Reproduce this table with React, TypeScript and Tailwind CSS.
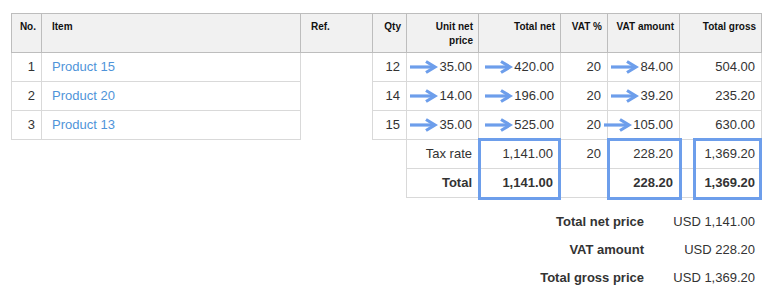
import React from "react";

type Line = {
  no: number;
  item: string;
  qty: number;
  unit: string;
  net: string;
  vat: number;
  vatAmount: string;
  gross: string;
};

const lines: Line[] = [
  { no: 1, item: "Product 15", qty: 12, unit: "35.00", net: "420.00", vat: 20, vatAmount: "84.00", gross: "504.00" },
  { no: 2, item: "Product 20", qty: 14, unit: "14.00", net: "196.00", vat: 20, vatAmount: "39.20", gross: "235.20" },
  { no: 3, item: "Product 13", qty: 15, unit: "35.00", net: "525.00", vat: 20, vatAmount: "105.00", gross: "630.00" },
];

const Arrow = () => (
  <svg width="28" height="14" viewBox="0 0 28 14" className="shrink-0 mr-[1px]">
    <line x1="0" y1="7" x2="24" y2="7" stroke="#6d9eeb" strokeWidth="3.2" />
    <polyline
      points="16,1.5 25,7 16,12.5"
      fill="none"
      stroke="#6d9eeb"
      strokeWidth="3.2"
      strokeLinejoin="miter"
    />
  </svg>
);

const ArrowCell = ({ value }: { value: string }) => (
  <td className="border border-[#d9d9d9] pr-[6px] align-middle">
    <div className="flex items-center justify-end">
      <Arrow />
      <span>{value}</span>
    </div>
  </td>
);

const th = "border border-[#bdbdbd] bg-[#f1f1f1] align-top pt-[6px] text-[10px] font-bold leading-[14px] text-[#111]";
const td = "border border-[#d9d9d9] align-middle";

const App = () => {
  return (
    <div
      className="w-[772px] h-[298px] bg-white text-[13px] text-[#333] overflow-hidden"
      style={{ fontFamily: '"Liberation Sans", Arial, sans-serif' }}
    >
      <div className="relative pt-[13px] pl-[11px]">
        <table className="table-fixed border-collapse w-[750px]">
          <colgroup>
            <col className="w-[30px]" />
            <col className="w-[259px]" />
            <col className="w-[72px]" />
            <col className="w-[34px]" />
            <col className="w-[72px]" />
            <col className="w-[82px]" />
            <col className="w-[47px]" />
            <col className="w-[72px]" />
            <col className="w-[82px]" />
          </colgroup>
          <thead>
            <tr className="h-[39px]">
              <th className={`${th} text-right pr-[5px]`}>No.</th>
              <th className={`${th} text-left pl-[10px]`}>Item</th>
              <th className={`${th} text-left pl-[10px]`}>Ref.</th>
              <th className={`${th} text-right pr-[5px]`}>Qty</th>
              <th className={`${th} text-right pr-[5px]`}>
                Unit net
                <br />
                price
              </th>
              <th className={`${th} text-right pr-[5px]`}>Total net</th>
              <th className={`${th} text-right pr-[5px]`}>VAT %</th>
              <th className={`${th} text-right pr-[5px]`}>VAT amount</th>
              <th className={`${th} text-right pr-[5px]`}>Total gross</th>
            </tr>
          </thead>
          <tbody>
            {lines.map((line, i) => (
              <tr key={line.no} className="h-[29px]">
                <td className={`${td} text-right pr-[6px]`}>{line.no}</td>
                <td className={`${td} pl-[10px] text-[#4f94d9]`}>{line.item}</td>
                {i === 0 && (
                  <td rowSpan={3} className="border-x border-[#d9d9d9]"></td>
                )}
                <td className={`${td} text-right pr-[6px]`}>{line.qty}</td>
                <ArrowCell value={line.unit} />
                <ArrowCell value={line.net} />
                <td className={`${td} text-right pr-[6px]`}>{line.vat}</td>
                <ArrowCell value={line.vatAmount} />
                <td className={`${td} text-right pr-[6px]`}>{line.gross}</td>
              </tr>
            ))}
            <tr className="h-[29px]">
              <td colSpan={4}></td>
              <td className={`${td} text-right pr-[6px]`}>Tax rate</td>
              <td className={`${td} text-right pr-[7px]`}>1,141.00</td>
              <td className={`${td} text-right pr-[6px]`}>20</td>
              <td className={`${td} text-right pr-[6px]`}>228.20</td>
              <td className={`${td} text-right pr-[6px]`}>1,369.20</td>
            </tr>
            <tr className="h-[29px] font-bold">
              <td colSpan={4}></td>
              <td className={`${td} text-right pr-[6px]`}>Total</td>
              <td className={`${td} text-right pr-[7px]`}>1,141.00</td>
              <td className={td}></td>
              <td className={`${td} text-right pr-[6px]`}>228.20</td>
              <td className={`${td} text-right pr-[6px]`}>1,369.20</td>
            </tr>
          </tbody>
        </table>

        {/* highlight boxes over the totals */}
        <div className="absolute left-[478px] top-[138px] w-[83px] h-[62px] border-[3px] border-[#6d9eeb]"></div>
        <div className="absolute left-[607px] top-[138px] w-[75px] h-[62px] border-[3px] border-[#6d9eeb]"></div>
        <div className="absolute left-[693px] top-[138px] w-[69px] h-[62px] border-[3px] border-[#6d9eeb]"></div>
      </div>

      <div className="flex justify-end pr-[17px] mt-[10px]">
        <div className="grid grid-cols-[auto_96px] gap-x-[15px]">
          <div className="h-[28px] flex items-center justify-end font-bold">Total net price</div>
          <div className="h-[28px] flex items-center justify-end">USD 1,141.00</div>
          <div className="h-[28px] flex items-center justify-end font-bold">VAT amount</div>
          <div className="h-[28px] flex items-center justify-end">USD 228.20</div>
          <div className="h-[28px] flex items-center justify-end font-bold">Total gross price</div>
          <div className="h-[28px] flex items-center justify-end">USD 1,369.20</div>
        </div>
      </div>
    </div>
  );
};

export default App;
